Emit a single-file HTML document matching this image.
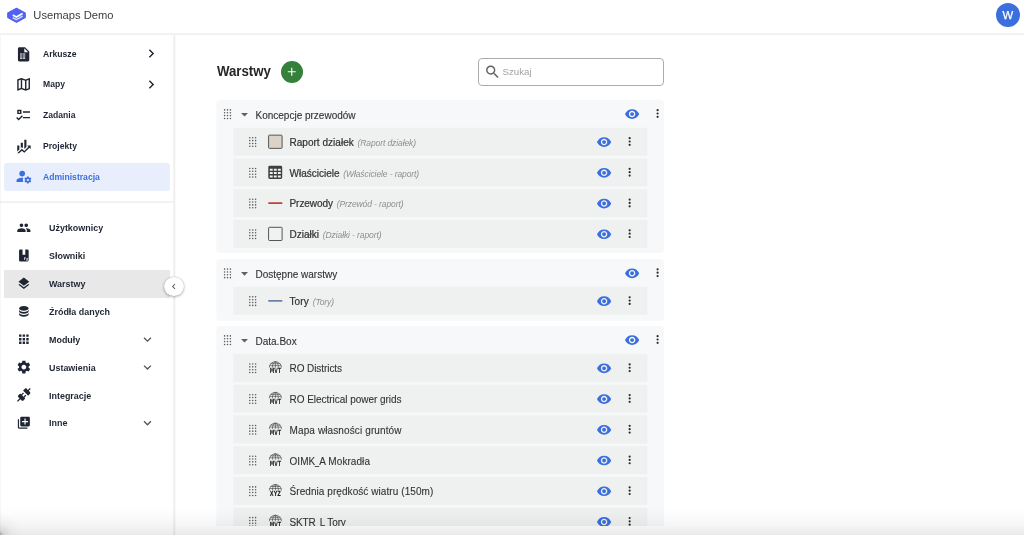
<!DOCTYPE html>
<html lang="pl">
<head>
<meta charset="utf-8">
<title>Usemaps Demo - Warstwy</title>
<style>
*{box-sizing:border-box;margin:0;padding:0}
html,body{width:1024px;height:535px;overflow:hidden;background:#fff}
body{font-family:"Liberation Sans",sans-serif;color:#1f2533;position:relative}
#app{position:absolute;left:0;top:0;width:1024px;height:535px;will-change:transform;opacity:.999}
svg{display:block;position:absolute;overflow:visible}
#hdr{position:absolute;left:0;top:0;width:1024px;height:35px;background:#fff;border-bottom:2px solid #f2f2f2}
#brand{position:absolute;left:33.3px;top:8px;font-size:11.2px;line-height:14px;color:#3c3c3c;white-space:nowrap}
#avatar{position:absolute;left:995.5px;top:2.9px;width:24.6px;height:24.6px;border-radius:50%;background:#3b6fde;color:#fff;font-size:11.3px;line-height:24.6px;text-align:center;-webkit-text-stroke:.25px #fff}
#side{position:absolute;left:0;top:35px;width:176px;height:500px;background:linear-gradient(to right,#fff 0,#fff 173px,#f3f3f3 173px,#f3f3f3 174px,#efefef 174px,#efefef 175px,#fafafa 175px,#fafafa 176px)}
.m1{position:absolute;left:43.4px;font-size:9.1px;font-weight:bold;line-height:12px;color:#1f2533;white-space:nowrap;transform:scaleX(.945);transform-origin:0 50%}
.m2{position:absolute;left:48.7px;font-size:9.7px;font-weight:bold;line-height:12px;color:#1f2533;white-space:nowrap;transform:scaleX(.922);transform-origin:0 50%}
#adm{position:absolute;left:4px;top:163px;width:165.5px;height:27.5px;border-radius:3px;background:#e8eefb}
#sel{position:absolute;left:4px;top:269.5px;width:165.5px;height:28px;background:#e8e8e8}
#sdiv{position:absolute;left:0;top:201px;width:173px;height:2px;background:#f2f2f2}
#coll{position:absolute;left:164.2px;top:276.8px;width:19.4px;height:19.4px;border-radius:50%;background:#fff;box-shadow:0 1px 3px rgba(0,0,0,.3),0 0 1px rgba(0,0,0,.35)}
#title{position:absolute;left:216.6px;top:62px;font-size:14px;font-weight:bold;line-height:18px;color:#262626;transform:scaleX(.945);transform-origin:0 50%}
#addb{position:absolute;left:280.6px;top:60.6px;width:22.4px;height:22.4px;border-radius:50%;background:#35803a}
#search{position:absolute;left:478px;top:58px;width:186px;height:28px;border:1px solid #acacac;border-radius:4px;background:#fff}
#search span{position:absolute;left:23.5px;top:7.4px;font-size:9.7px;line-height:12px;color:#a2a2a2}
.grp{position:absolute;left:216.1px;width:448px;background:#f7f8fa;border-radius:4px}
.gt{position:absolute;left:255.5px;font-size:10px;line-height:12px;color:#333;-webkit-text-stroke:.12px #333;white-space:nowrap}
.row{position:absolute;left:233.2px;width:414.4px;height:28.1px;background:#eff1f1}
.rt{position:absolute;left:289.5px;font-size:10px;line-height:12px;color:#333;white-space:nowrap}
.rt b{font-weight:normal;-webkit-text-stroke:.22px #333}
.rt>span{-webkit-text-stroke:.1px #333}
.us{display:inline-block;width:4px;transform:scaleX(.72);transform-origin:0 50%}
.rt i{font-size:8.5px;color:#8e8e8e;letter-spacing:-.1px;margin-left:1px}
.sw{position:absolute;width:14.5px;height:14.2px;border:1px solid #505050;border-radius:1.2px}
.ln{position:absolute;left:268px;width:14.5px;height:1.5px}
#foot{position:absolute;left:176px;top:525.7px;width:848px;height:9.3px;background:#fff}
#fade{position:absolute;left:0;top:507px;width:1024px;height:28px;background:linear-gradient(to bottom,rgba(0,0,0,0) 0%,rgba(0,0,0,.01) 25%,rgba(0,0,0,.026) 48%,rgba(0,0,0,.048) 70%,rgba(0,0,0,.082) 100%)}
#corner{position:absolute;left:0;top:505px;width:30px;height:30px;background:radial-gradient(circle at 0 100%,rgba(0,0,0,.3) 0,rgba(0,0,0,.09) 4px,rgba(0,0,0,.025) 12px,rgba(0,0,0,0) 22px)}
#ledge{position:absolute;left:0;top:35px;width:1px;height:500px;background:rgba(0,0,0,.03)}
</style>
</head>
<body>
<div id="app">
<div id="hdr">
  <svg style="left:0;top:0" width="34" height="32" viewBox="0 0 34 32"><path d="M16.5 8.3l8.7 4.7v4.4l-8.7 4.9-8.7-4.9V13z" fill="#5262f0" stroke="#5262f0" stroke-width="1.3" stroke-linejoin="round"/><path d="M12.7 15.1l3.7 2 6.2-3.5" fill="none" stroke="#fff" stroke-width="1.7" stroke-linejoin="round"/><path d="M12.7 17.6l3.7 2 6.2-3.5" fill="none" stroke="#fff" stroke-width="1.3" stroke-linejoin="round" opacity=".8"/></svg>
  <div id="brand">Usemaps Demo</div>
  <div id="avatar">W</div>
</div>
<div id="side"></div>
<div id="adm"></div>
<div id="sel"></div>
<div id="sdiv"></div>

<div class="m1" style="top:48px">Arkusze</div>
<svg style="left:15px;top:45px" width="18" height="18" viewBox="15 45 18 18"><path transform="translate(15.10 45.80) scale(0.7083)" d="M14 2H6C4.89 2 4 2.9 4 4V20C4 21.11 4.89 22 6 22H18C19.11 22 20 21.11 20 20V8L14 2M13 3.5L18.5 9H13V3.5M7 10.7V12.4H10.4V10.7H7M7 13.6V15.2H10.4V13.6H7M7 16.5V18.4H10.4V16.5H7M11.2 10.7V12.4H14.4V10.7H11.2M11.2 13.6V15.2H14.4V13.6H11.2M11.2 16.5V18.4H14.4V16.5H11.2Z" fill="#1f2533" fill-rule="evenodd"/></svg>
<svg style="left:142px;top:45px" width="18" height="18" viewBox="142 45 18 18"><path transform="translate(142.80 45.10) scale(0.7083)" d="M10 6L8.59 7.41 13.17 12l-4.58 4.59L10 18l6-6z" fill="#1f2533"/></svg>
<div class="m1" style="top:78px">Mapy</div>
<svg style="left:15px;top:75px" width="18" height="18" viewBox="15 75 18 18"><path transform="translate(15.10 75.80) scale(0.7083)" d="M20.5 3l-.16.03L15 5.1 9 3 3.36 4.9c-.21.07-.36.25-.36.48V20.5c0 .28.22.5.5.5l.16-.03L9 18.9l6 2.1 5.64-1.9c.21-.07.36-.25.36-.48V3.5c0-.28-.22-.5-.5-.5zM10 5.47l4 1.4v11.66l-4-1.4V5.47zm-5 .99l3-1.01v11.7l-3 1.16V6.46zm14 11.08l-3 1.01V6.86l3-1.16v11.84z" fill="#1f2533"/></svg>
<svg style="left:142px;top:75px" width="18" height="18" viewBox="142 75 18 18"><path transform="translate(142.80 75.90) scale(0.7083)" d="M10 6L8.59 7.41 13.17 12l-4.58 4.59L10 18l6-6z" fill="#1f2533"/></svg>
<div class="m1" style="top:109px">Zadania</div>
<svg style="left:15px;top:106px" width="18" height="18" viewBox="15 106 18 18"><path transform="translate(15.10 106.30) scale(0.7083)" d="M3,5H9V11H3V5M5,7V9H7V7H5M11,7H21V9H11V7M11,15H21V17H11V15M5,20L1.5,16.5L2.91,15.09L5,17.17L9.59,12.59L11,14L5,20Z" fill="#1f2533"/></svg>
<div class="m1" style="top:140px">Projekty</div>
<svg style="left:15px;top:137px" width="18" height="18" viewBox="15 137 18 18"><path transform="translate(15.10 137.70) scale(0.7083)" d="M6,16.5L3,19.44V11H6M11,14.66L9.43,13.32L8,14.64V7H11M16,13L13,16V3H16M18.81,12.81L17,11H22V16L20.21,14.21L13,21.36L9.53,18.34L5.75,22H3L9.47,15.66L13,18.64" fill="#1f2533"/></svg>
<div class="m1" style="top:171px;color:#3b6fde">Administracja</div>
<svg style="left:15px;top:167px" width="18" height="18" viewBox="15 167 18 18"><path transform="translate(15.10 167.90) scale(0.7083)" d="M10 4A4 4 0 0 0 6 8A4 4 0 0 0 10 12A4 4 0 0 0 14 8A4 4 0 0 0 10 4M17 12C16.87 12 16.76 12.09 16.74 12.21L16.55 13.53C16.25 13.66 15.96 13.82 15.7 14L14.46 13.5C14.35 13.5 14.22 13.5 14.15 13.63L13.15 15.36C13.09 15.47 13.11 15.6 13.21 15.68L14.27 16.5C14.25 16.67 14.24 16.83 14.24 17C14.24 17.17 14.25 17.33 14.27 17.5L13.21 18.32C13.12 18.4 13.09 18.53 13.15 18.64L14.15 20.37C14.21 20.5 14.34 20.5 14.46 20.5L15.7 20C15.96 20.18 16.24 20.35 16.55 20.47L16.74 21.79C16.76 21.91 16.86 22 17 22H19C19.11 22 19.22 21.91 19.24 21.79L19.43 20.47C19.73 20.34 20 20.18 20.27 20L21.5 20.5C21.63 20.5 21.76 20.5 21.83 20.37L22.83 18.64C22.89 18.53 22.86 18.4 22.77 18.32L21.7 17.5C21.72 17.33 21.74 17.17 21.74 17C21.74 16.83 21.73 16.67 21.7 16.5L22.76 15.68C22.85 15.6 22.88 15.47 22.82 15.36L21.82 13.63C21.76 13.5 21.63 13.5 21.5 13.5L20.27 14C20 13.82 19.73 13.65 19.42 13.53L19.23 12.21C19.22 12.09 19.11 12 19 12H17M10 14C5.58 14 2 15.79 2 18V20H11.68A7 7 0 0 1 11 17A7 7 0 0 1 11.64 14.09C11.11 14.03 10.56 14 10 14M18 15.5C18.83 15.5 19.5 16.17 19.5 17C19.5 17.83 18.83 18.5 18 18.5C17.16 18.5 16.5 17.83 16.5 17C16.5 16.17 17.17 15.5 18 15.5Z" fill="#3b6fde"/></svg>
<div class="m2" style="top:222px">Użytkownicy</div>
<svg style="left:16px;top:220px" width="16" height="15" viewBox="16 220 16 15"><path transform="translate(16.65 220.50) scale(0.6000)" d="M16 11c1.66 0 2.99-1.34 2.99-3S17.66 5 16 5c-1.66 0-3 1.34-3 3s1.34 3 3 3zm-8 0c1.66 0 2.99-1.34 2.99-3S9.66 5 8 5C6.34 5 5 6.34 5 8s1.34 3 3 3zm0 2c-2.33 0-7 1.17-7 3.5V19h14v-2.5c0-2.33-4.67-3.5-7-3.5zm8 0c-.29 0-.62.02-.97.05 1.16.84 1.97 1.97 1.97 3.45V19h6v-2.5c0-2.33-4.67-3.5-7-3.5z" fill="#1f2533"/></svg>
<div class="m2" style="top:250px">Słowniki</div>
<svg style="left:16px;top:248px" width="16" height="15" viewBox="16 248 16 15"><path transform="translate(16.65 248.37) scale(0.6000)" d="M6 2h12a2 2 0 0 1 2 2v16a2 2 0 0 1-2 2H6a2 2 0 0 1-2-2V4a2 2 0 0 1 2-2zm3.8 0v8.8h4.6V2zM12.6 14.6v4.6h1.1v-1.7h1v-.9h-1v-1.1h1.6v-.9zM16 16.3v.9h1.5l-1.7 2v.9h3.4v-.9h-1.8l1.7-2v-.9z" fill="#1f2533"/></svg>
<div class="m2" style="top:278px">Warstwy</div>
<svg style="left:16px;top:276px" width="16" height="15" viewBox="16 276 16 15"><path transform="translate(16.65 276.24) scale(0.6000)" d="M11.99 18.54l-7.37-5.73L3 14.07l9 7 9-7-1.63-1.27-7.38 5.74zM12 16l7.36-5.73L21 9l-9-7-9 7 1.63 1.27L12 16z" fill="#1f2533"/></svg>
<div class="m2" style="top:306px">Źródła danych</div>
<svg style="left:16px;top:304px" width="16" height="15" viewBox="16 304 16 15"><path transform="translate(16.65 304.11) scale(0.6000)" d="M12,3C7.58,3 4,4.79 4,7C4,9.21 7.58,11 12,11C16.42,11 20,9.21 20,7C20,4.79 16.42,3 12,3M4,9V12C4,14.21 7.58,16 12,16C16.42,16 20,14.21 20,12V9C20,11.21 16.42,13 12,13C7.58,13 4,11.21 4,9M4,14V17C4,19.21 7.58,21 12,21C16.42,21 20,19.21 20,17V14C20,16.21 16.42,18 12,18C7.58,18 4,16.21 4,14Z" fill="#1f2533"/></svg>
<div class="m2" style="top:334px">Moduły</div>
<svg style="left:16px;top:331px" width="16" height="16" viewBox="16 331 16 16"><path transform="translate(16.65 331.98) scale(0.6000)" d="M4 8h4V4H4v4zm6 12h4v-4h-4v4zm-6 0h4v-4H4v4zm0-6h4v-4H4v4zm6 0h4v-4h-4v4zm6-10v4h4V4h-4zm-6 4h4V4h-4v4zm6 6h4v-4h-4v4zm0 6h4v-4h-4v4z" fill="#1f2533"/></svg>
<svg style="left:139px;top:331px" width="17" height="17" viewBox="139 331 17 17"><path transform="translate(139.65 331.68) scale(0.6500)" d="M16.59 8.59L12 13.17 7.41 8.59 6 10l6 6 6-6z" fill="#555"/></svg>
<div class="m2" style="top:362px">Ustawienia</div>
<svg style="left:15px;top:359px" width="17" height="17" viewBox="15 359 17 17"><path transform="translate(15.85 359.05) scale(0.6667)" d="M19.14 12.94c.04-.3.06-.61.06-.94 0-.32-.02-.64-.07-.94l2.03-1.58c.18-.14.23-.41.12-.61l-1.92-3.32c-.12-.22-.37-.29-.59-.22l-2.39.96c-.5-.38-1.03-.7-1.62-.94l-.36-2.54c-.04-.24-.24-.41-.48-.41h-3.84c-.24 0-.43.17-.47.41l-.36 2.54c-.59.24-1.13.57-1.62.94l-2.39-.96c-.22-.08-.47 0-.59.22L2.74 8.87c-.12.21-.08.47.12.61l2.03 1.58c-.05.3-.09.63-.09.94s.02.64.07.94l-2.03 1.58c-.18.14-.23.41-.12.61l1.92 3.32c.12.22.37.29.59.22l2.39-.96c.5.38 1.03.7 1.62.94l.36 2.54c.05.24.24.41.48.41h3.84c.24 0 .44-.17.47-.41l.36-2.54c.59-.24 1.13-.56 1.62-.94l2.39.96c.22.08.47 0 .59-.22l1.92-3.32c.12-.22.07-.47-.12-.61l-2.01-1.58zM12 15.6c-1.98 0-3.6-1.62-3.6-3.6s1.62-3.6 3.6-3.6 3.6 1.62 3.6 3.6-1.62 3.6-3.6 3.6z" fill="#1f2533"/></svg>
<svg style="left:139px;top:359px" width="17" height="17" viewBox="139 359 17 17"><path transform="translate(139.65 359.55) scale(0.6500)" d="M16.59 8.59L12 13.17 7.41 8.59 6 10l6 6 6-6z" fill="#555"/></svg>
<div class="m2" style="top:390px">Integracje</div>
<svg style="left:16px;top:387px" width="16" height="16" viewBox="16 387 16 16"><path transform="translate(16.05 387.12) scale(0.6500)" d="M21.4 7.5C22.2 8.3 22.2 9.6 21.4 10.3L18.6 13.1L10.8 5.3L13.6 2.5C14.4 1.7 15.7 1.7 16.4 2.5L18.2 4.3L21.2 1.3L22.6 2.7L19.6 5.7L21.4 7.5M15.6 13.3L14.2 11.9L11.4 14.7L9.3 12.6L12.1 9.8L10.7 8.4L7.9 11.2L6.4 9.8L3.6 12.6C2.8 13.4 2.8 14.7 3.6 15.4L5.4 17.2L1.4 21.2L2.8 22.6L6.8 18.6L8.6 20.4C9.4 21.2 10.7 21.2 11.4 20.4L14.2 17.6L12.8 16.2L15.6 13.3Z" fill="#1f2533"/></svg>
<div class="m2" style="top:417px">Inne</div>
<svg style="left:16px;top:415px" width="16" height="15" viewBox="16 415 16 15"><path transform="translate(16.65 415.59) scale(0.6000)" d="M4 6H2v14c0 1.1.9 2 2 2h14v-2H4V6zm16-4H8c-1.1 0-2 .9-2 2v12c0 1.1.9 2 2 2h12c1.1 0 2-.9 2-2V4c0-1.1-.9-2-2-2zm-1 9h-4v4h-2v-4H9V9h4V5h2v4h4v2z" fill="#1f2533"/></svg>
<svg style="left:139px;top:415px" width="17" height="16" viewBox="139 415 17 16"><path transform="translate(139.65 415.29) scale(0.6500)" d="M16.59 8.59L12 13.17 7.41 8.59 6 10l6 6 6-6z" fill="#555"/></svg>
<div id="coll"></div>
<svg style="left:168px;top:280px" width="12" height="12" viewBox="168 280 12 12"><path transform="translate(168.30 280.90) scale(0.4583)" d="M15.41 7.41L14 6l-6 6 6 6 1.41-1.41L10.83 12z" fill="#555"/></svg>
<div id="title">Warstwy</div><div id="addb"></div>
<svg style="left:284px;top:64px" width="15" height="15" viewBox="284 64 15 15"><path transform="translate(284.95 64.95) scale(0.5667)" d="M19 13h-6v6h-2v-6H5v-2h6V5h2v6h6v2z" fill="#fff"/></svg>
<div id="search"><span>Szukaj</span></div>
<svg style="left:483px;top:63px" width="19" height="18" viewBox="483 63 19 18"><path transform="translate(483.90 63.30) scale(0.7167)" d="M15.5 14h-.79l-.28-.27C15.41 12.59 16 11.11 16 9.5 16 5.91 13.09 3 9.5 3S3 5.91 3 9.5 5.91 16 9.5 16c1.61 0 3.09-.59 4.23-1.57l.27.28v.79l5 4.99L20.49 19l-4.99-5zm-6 0C7.01 14 5 11.99 5 9.5S7.01 5 9.5 5 14 7.01 14 9.5 11.99 14 9.5 14z" fill="#666"/></svg>
<svg style="left:210px;top:95px" width="460" height="440" viewBox="210 95 460 440"><rect x="216.3" y="99.9" width="447.8" height="153.2" rx="4" fill="#f7f8fa"/><rect x="216.3" y="259.1" width="447.8" height="61.6" rx="4" fill="#f7f8fa"/><rect x="216.3" y="325.9" width="447.8" height="210" rx="4" fill="#f7f8fa"/><rect x="233.3" y="127.70" width="414.1" height="28.1" fill="#eff1f1"/><rect x="233.3" y="158.42" width="414.1" height="28.1" fill="#eff1f1"/><rect x="233.3" y="189.14" width="414.1" height="28.1" fill="#eff1f1"/><rect x="233.3" y="219.86" width="414.1" height="28.1" fill="#eff1f1"/><rect x="233.3" y="286.80" width="414.1" height="28.1" fill="#eff1f1"/><rect x="233.3" y="353.95" width="414.1" height="28.1" fill="#eff1f1"/><rect x="233.3" y="384.67" width="414.1" height="28.1" fill="#eff1f1"/><rect x="233.3" y="415.39" width="414.1" height="28.1" fill="#eff1f1"/><rect x="233.3" y="446.11" width="414.1" height="28.1" fill="#eff1f1"/><rect x="233.3" y="476.83" width="414.1" height="28.1" fill="#eff1f1"/><rect x="233.3" y="507.55" width="414.1" height="28.1" fill="#eff1f1"/></svg>
<div class="gt" style="top:110px">Koncepcje przewodów</div>
<svg style="left:223px;top:109px" width="9" height="11" viewBox="223 109 9 11"><g fill="#5c5c5c"><circle cx="224.60" cy="109.90" r="0.78"/><circle cx="227.50" cy="109.90" r="0.78"/><circle cx="230.40" cy="109.90" r="0.78"/><circle cx="224.60" cy="112.75" r="0.78"/><circle cx="227.50" cy="112.75" r="0.78"/><circle cx="230.40" cy="112.75" r="0.78"/><circle cx="224.60" cy="115.60" r="0.78"/><circle cx="227.50" cy="115.60" r="0.78"/><circle cx="230.40" cy="115.60" r="0.78"/><circle cx="224.60" cy="118.45" r="0.78"/><circle cx="227.50" cy="118.45" r="0.78"/><circle cx="230.40" cy="118.45" r="0.78"/></g></svg>
<svg style="left:241px;top:112px" width="7" height="5" viewBox="241 112 7 5"><path d="M241 112.90h7l-3.5 3.6z" fill="#606060"/></svg>
<svg style="left:624px;top:106px" width="16" height="16" viewBox="624 106 16 16"><path transform="translate(624.35 106.35) scale(0.6458)" d="M12 4.5C7 4.5 2.73 7.61 1 12c1.73 4.39 6 7.5 11 7.5s9.27-3.11 11-7.5c-1.73-4.39-6-7.5-11-7.5zM12 17c-2.76 0-5-2.24-5-5s2.24-5 5-5 5 2.24 5 5-2.24 5-5 5zm0-8c-1.66 0-3 1.34-3 3s1.34 3 3 3 3-1.34 3-3-1.34-3-3-3z" fill="#3b6fde"/></svg>
<svg style="left:655px;top:107px" width="5" height="13" viewBox="655 107 5 13"><circle cx="657.60" cy="110.15" r="1.1" fill="#2a2a2a"/><circle cx="657.60" cy="113.50" r="1.1" fill="#2a2a2a"/><circle cx="657.60" cy="116.85" r="1.1" fill="#2a2a2a"/></svg>
<div class="gt" style="top:269px">Dostępne warstwy</div>
<svg style="left:223px;top:268px" width="9" height="11" viewBox="223 268 9 11"><g fill="#5c5c5c"><circle cx="224.60" cy="269.10" r="0.78"/><circle cx="227.50" cy="269.10" r="0.78"/><circle cx="230.40" cy="269.10" r="0.78"/><circle cx="224.60" cy="271.95" r="0.78"/><circle cx="227.50" cy="271.95" r="0.78"/><circle cx="230.40" cy="271.95" r="0.78"/><circle cx="224.60" cy="274.80" r="0.78"/><circle cx="227.50" cy="274.80" r="0.78"/><circle cx="230.40" cy="274.80" r="0.78"/><circle cx="224.60" cy="277.65" r="0.78"/><circle cx="227.50" cy="277.65" r="0.78"/><circle cx="230.40" cy="277.65" r="0.78"/></g></svg>
<svg style="left:241px;top:272px" width="7" height="4" viewBox="241 272 7 4"><path d="M241 272.10h7l-3.5 3.6z" fill="#606060"/></svg>
<svg style="left:624px;top:265px" width="16" height="17" viewBox="624 265 16 17"><path transform="translate(624.35 265.55) scale(0.6458)" d="M12 4.5C7 4.5 2.73 7.61 1 12c1.73 4.39 6 7.5 11 7.5s9.27-3.11 11-7.5c-1.73-4.39-6-7.5-11-7.5zM12 17c-2.76 0-5-2.24-5-5s2.24-5 5-5 5 2.24 5 5-2.24 5-5 5zm0-8c-1.66 0-3 1.34-3 3s1.34 3 3 3 3-1.34 3-3-1.34-3-3-3z" fill="#3b6fde"/></svg>
<svg style="left:655px;top:266px" width="5" height="13" viewBox="655 266 5 13"><circle cx="657.60" cy="269.35" r="1.1" fill="#2a2a2a"/><circle cx="657.60" cy="272.70" r="1.1" fill="#2a2a2a"/><circle cx="657.60" cy="276.05" r="1.1" fill="#2a2a2a"/></svg>
<div class="gt" style="top:336px">Data.Box</div>
<svg style="left:223px;top:334px" width="9" height="12" viewBox="223 334 9 12"><g fill="#5c5c5c"><circle cx="224.60" cy="335.90" r="0.78"/><circle cx="227.50" cy="335.90" r="0.78"/><circle cx="230.40" cy="335.90" r="0.78"/><circle cx="224.60" cy="338.75" r="0.78"/><circle cx="227.50" cy="338.75" r="0.78"/><circle cx="230.40" cy="338.75" r="0.78"/><circle cx="224.60" cy="341.60" r="0.78"/><circle cx="227.50" cy="341.60" r="0.78"/><circle cx="230.40" cy="341.60" r="0.78"/><circle cx="224.60" cy="344.45" r="0.78"/><circle cx="227.50" cy="344.45" r="0.78"/><circle cx="230.40" cy="344.45" r="0.78"/></g></svg>
<svg style="left:241px;top:338px" width="7" height="5" viewBox="241 338 7 5"><path d="M241 338.90h7l-3.5 3.6z" fill="#606060"/></svg>
<svg style="left:624px;top:332px" width="16" height="16" viewBox="624 332 16 16"><path transform="translate(624.35 332.35) scale(0.6458)" d="M12 4.5C7 4.5 2.73 7.61 1 12c1.73 4.39 6 7.5 11 7.5s9.27-3.11 11-7.5c-1.73-4.39-6-7.5-11-7.5zM12 17c-2.76 0-5-2.24-5-5s2.24-5 5-5 5 2.24 5 5-2.24 5-5 5zm0-8c-1.66 0-3 1.34-3 3s1.34 3 3 3 3-1.34 3-3-1.34-3-3-3z" fill="#3b6fde"/></svg>
<svg style="left:655px;top:333px" width="5" height="13" viewBox="655 333 5 13"><circle cx="657.60" cy="336.15" r="1.1" fill="#2a2a2a"/><circle cx="657.60" cy="339.50" r="1.1" fill="#2a2a2a"/><circle cx="657.60" cy="342.85" r="1.1" fill="#2a2a2a"/></svg>
<div class="rt" style="top:137px"><b style="letter-spacing:0.025px">Raport działek</b> <i>(Raport działek)</i></div>
<svg style="left:248px;top:136px" width="9" height="12" viewBox="248 136 9 12"><g fill="#5c5c5c"><circle cx="249.80" cy="137.75" r="0.78"/><circle cx="252.70" cy="137.75" r="0.78"/><circle cx="255.60" cy="137.75" r="0.78"/><circle cx="249.80" cy="140.60" r="0.78"/><circle cx="252.70" cy="140.60" r="0.78"/><circle cx="255.60" cy="140.60" r="0.78"/><circle cx="249.80" cy="143.45" r="0.78"/><circle cx="252.70" cy="143.45" r="0.78"/><circle cx="255.60" cy="143.45" r="0.78"/><circle cx="249.80" cy="146.30" r="0.78"/><circle cx="252.70" cy="146.30" r="0.78"/><circle cx="255.60" cy="146.30" r="0.78"/></g></svg>
<svg style="left:267px;top:133px" width="17" height="17" viewBox="267 133 17 17"><rect x="268.6" y="135.15" width="13.5" height="13.2" rx="0.8" fill="#dcd2c8" stroke="#4c4c4c" stroke-width="0.95"/></svg>
<svg style="left:596px;top:134px" width="16" height="16" viewBox="596 134 16 16"><path transform="translate(596.35 134.35) scale(0.6458)" d="M12 4.5C7 4.5 2.73 7.61 1 12c1.73 4.39 6 7.5 11 7.5s9.27-3.11 11-7.5c-1.73-4.39-6-7.5-11-7.5zM12 17c-2.76 0-5-2.24-5-5s2.24-5 5-5 5 2.24 5 5-2.24 5-5 5zm0-8c-1.66 0-3 1.34-3 3s1.34 3 3 3 3-1.34 3-3-1.34-3-3-3z" fill="#3b6fde"/></svg>
<svg style="left:627px;top:135px" width="5" height="13" viewBox="627 135 5 13"><circle cx="629.65" cy="138.15" r="1.1" fill="#2a2a2a"/><circle cx="629.65" cy="141.50" r="1.1" fill="#2a2a2a"/><circle cx="629.65" cy="144.85" r="1.1" fill="#2a2a2a"/></svg>
<div class="rt" style="top:168px"><b style="letter-spacing:-0.001px">Właściciele</b> <i>(Właściciele - raport)</i></div>
<svg style="left:248px;top:167px" width="9" height="12" viewBox="248 167 9 12"><g fill="#5c5c5c"><circle cx="249.80" cy="168.47" r="0.78"/><circle cx="252.70" cy="168.47" r="0.78"/><circle cx="255.60" cy="168.47" r="0.78"/><circle cx="249.80" cy="171.32" r="0.78"/><circle cx="252.70" cy="171.32" r="0.78"/><circle cx="255.60" cy="171.32" r="0.78"/><circle cx="249.80" cy="174.17" r="0.78"/><circle cx="252.70" cy="174.17" r="0.78"/><circle cx="255.60" cy="174.17" r="0.78"/><circle cx="249.80" cy="177.02" r="0.78"/><circle cx="252.70" cy="177.02" r="0.78"/><circle cx="255.60" cy="177.02" r="0.78"/></g></svg>
<svg style="left:268px;top:165px" width="15" height="15" viewBox="268 165 15 15"><path transform="translate(268.3 165.82)" d="M1.4 0h11.1a1.4 1.4 0 0 1 1.4 1.4v10.4a1.4 1.4 0 0 1-1.4 1.4H1.4a1.4 1.4 0 0 1-1.4-1.4V1.4a1.4 1.4 0 0 1 1.4-1.4zM1.5 3.0H4.4V4.9H1.5V3.0M1.5 6.3H4.4V8.2H1.5V6.3M1.5 9.6H4.4V11.6H1.5V9.6M5.55 3.0H8.45V4.9H5.55V3.0M5.55 6.3H8.45V8.2H5.55V6.3M5.55 9.6H8.45V11.6H5.55V9.6M9.6 3.0H12.5V4.9H9.6V3.0M9.6 6.3H12.5V8.2H9.6V6.3M9.6 9.6H12.5V11.6H9.6V9.6Z" fill="#3e3e3e" fill-rule="evenodd"/></svg>
<svg style="left:596px;top:165px" width="16" height="16" viewBox="596 165 16 16"><path transform="translate(596.35 165.07) scale(0.6458)" d="M12 4.5C7 4.5 2.73 7.61 1 12c1.73 4.39 6 7.5 11 7.5s9.27-3.11 11-7.5c-1.73-4.39-6-7.5-11-7.5zM12 17c-2.76 0-5-2.24-5-5s2.24-5 5-5 5 2.24 5 5-2.24 5-5 5zm0-8c-1.66 0-3 1.34-3 3s1.34 3 3 3 3-1.34 3-3-1.34-3-3-3z" fill="#3b6fde"/></svg>
<svg style="left:627px;top:166px" width="5" height="13" viewBox="627 166 5 13"><circle cx="629.65" cy="168.87" r="1.1" fill="#2a2a2a"/><circle cx="629.65" cy="172.22" r="1.1" fill="#2a2a2a"/><circle cx="629.65" cy="175.57" r="1.1" fill="#2a2a2a"/></svg>
<div class="rt" style="top:198px"><b style="letter-spacing:-0.059px">Przewody</b> <i>(Przewód - raport)</i></div>
<svg style="left:248px;top:198px" width="9" height="11" viewBox="248 198 9 11"><g fill="#5c5c5c"><circle cx="249.80" cy="199.19" r="0.78"/><circle cx="252.70" cy="199.19" r="0.78"/><circle cx="255.60" cy="199.19" r="0.78"/><circle cx="249.80" cy="202.04" r="0.78"/><circle cx="252.70" cy="202.04" r="0.78"/><circle cx="255.60" cy="202.04" r="0.78"/><circle cx="249.80" cy="204.89" r="0.78"/><circle cx="252.70" cy="204.89" r="0.78"/><circle cx="255.60" cy="204.89" r="0.78"/><circle cx="249.80" cy="207.74" r="0.78"/><circle cx="252.70" cy="207.74" r="0.78"/><circle cx="255.60" cy="207.74" r="0.78"/></g></svg>
<svg style="left:268px;top:201px" width="15" height="5" viewBox="268 201 15 5"><rect x="268.2" y="202.24" width="14.2" height="1.7" rx=".4" fill="#bb433b"/></svg>
<svg style="left:596px;top:195px" width="16" height="17" viewBox="596 195 16 17"><path transform="translate(596.35 195.79) scale(0.6458)" d="M12 4.5C7 4.5 2.73 7.61 1 12c1.73 4.39 6 7.5 11 7.5s9.27-3.11 11-7.5c-1.73-4.39-6-7.5-11-7.5zM12 17c-2.76 0-5-2.24-5-5s2.24-5 5-5 5 2.24 5 5-2.24 5-5 5zm0-8c-1.66 0-3 1.34-3 3s1.34 3 3 3 3-1.34 3-3-1.34-3-3-3z" fill="#3b6fde"/></svg>
<svg style="left:627px;top:196px" width="5" height="13" viewBox="627 196 5 13"><circle cx="629.65" cy="199.59" r="1.1" fill="#2a2a2a"/><circle cx="629.65" cy="202.94" r="1.1" fill="#2a2a2a"/><circle cx="629.65" cy="206.29" r="1.1" fill="#2a2a2a"/></svg>
<div class="rt" style="top:229px"><b style="letter-spacing:0.008px">Działki</b> <i>(Działki - raport)</i></div>
<svg style="left:248px;top:229px" width="9" height="11" viewBox="248 229 9 11"><g fill="#5c5c5c"><circle cx="249.80" cy="229.91" r="0.78"/><circle cx="252.70" cy="229.91" r="0.78"/><circle cx="255.60" cy="229.91" r="0.78"/><circle cx="249.80" cy="232.76" r="0.78"/><circle cx="252.70" cy="232.76" r="0.78"/><circle cx="255.60" cy="232.76" r="0.78"/><circle cx="249.80" cy="235.61" r="0.78"/><circle cx="252.70" cy="235.61" r="0.78"/><circle cx="255.60" cy="235.61" r="0.78"/><circle cx="249.80" cy="238.46" r="0.78"/><circle cx="252.70" cy="238.46" r="0.78"/><circle cx="255.60" cy="238.46" r="0.78"/></g></svg>
<svg style="left:267px;top:225px" width="17" height="17" viewBox="267 225 17 17"><rect x="268.6" y="227.31" width="13.5" height="13.2" rx="0.8" fill="#f0f1f1" stroke="#4c4c4c" stroke-width="0.95"/></svg>
<svg style="left:596px;top:226px" width="16" height="17" viewBox="596 226 16 17"><path transform="translate(596.35 226.51) scale(0.6458)" d="M12 4.5C7 4.5 2.73 7.61 1 12c1.73 4.39 6 7.5 11 7.5s9.27-3.11 11-7.5c-1.73-4.39-6-7.5-11-7.5zM12 17c-2.76 0-5-2.24-5-5s2.24-5 5-5 5 2.24 5 5-2.24 5-5 5zm0-8c-1.66 0-3 1.34-3 3s1.34 3 3 3 3-1.34 3-3-1.34-3-3-3z" fill="#3b6fde"/></svg>
<svg style="left:627px;top:227px" width="5" height="13" viewBox="627 227 5 13"><circle cx="629.65" cy="230.31" r="1.1" fill="#2a2a2a"/><circle cx="629.65" cy="233.66" r="1.1" fill="#2a2a2a"/><circle cx="629.65" cy="237.01" r="1.1" fill="#2a2a2a"/></svg>
<div class="rt" style="top:296px"><b style="letter-spacing:0.120px">Tory</b> <i>(Tory)</i></div>
<svg style="left:248px;top:295px" width="9" height="12" viewBox="248 295 9 12"><g fill="#5c5c5c"><circle cx="249.80" cy="296.85" r="0.78"/><circle cx="252.70" cy="296.85" r="0.78"/><circle cx="255.60" cy="296.85" r="0.78"/><circle cx="249.80" cy="299.70" r="0.78"/><circle cx="252.70" cy="299.70" r="0.78"/><circle cx="255.60" cy="299.70" r="0.78"/><circle cx="249.80" cy="302.55" r="0.78"/><circle cx="252.70" cy="302.55" r="0.78"/><circle cx="255.60" cy="302.55" r="0.78"/><circle cx="249.80" cy="305.40" r="0.78"/><circle cx="252.70" cy="305.40" r="0.78"/><circle cx="255.60" cy="305.40" r="0.78"/></g></svg>
<svg style="left:268px;top:298px" width="15" height="5" viewBox="268 298 15 5"><rect x="268.2" y="300.05" width="14.2" height="1.7" rx=".4" fill="#6a82a9"/></svg>
<svg style="left:596px;top:293px" width="16" height="16" viewBox="596 293 16 16"><path transform="translate(596.35 293.45) scale(0.6458)" d="M12 4.5C7 4.5 2.73 7.61 1 12c1.73 4.39 6 7.5 11 7.5s9.27-3.11 11-7.5c-1.73-4.39-6-7.5-11-7.5zM12 17c-2.76 0-5-2.24-5-5s2.24-5 5-5 5 2.24 5 5-2.24 5-5 5zm0-8c-1.66 0-3 1.34-3 3s1.34 3 3 3 3-1.34 3-3-1.34-3-3-3z" fill="#3b6fde"/></svg>
<svg style="left:627px;top:294px" width="5" height="13" viewBox="627 294 5 13"><circle cx="629.65" cy="297.25" r="1.1" fill="#2a2a2a"/><circle cx="629.65" cy="300.60" r="1.1" fill="#2a2a2a"/><circle cx="629.65" cy="303.95" r="1.1" fill="#2a2a2a"/></svg>
<div class="rt" style="top:363px"><span style="letter-spacing:-0.075px">RO Districts</span></div>
<svg style="left:248px;top:363px" width="9" height="11" viewBox="248 363 9 11"><g fill="#5c5c5c"><circle cx="249.80" cy="364.00" r="0.78"/><circle cx="252.70" cy="364.00" r="0.78"/><circle cx="255.60" cy="364.00" r="0.78"/><circle cx="249.80" cy="366.85" r="0.78"/><circle cx="252.70" cy="366.85" r="0.78"/><circle cx="255.60" cy="366.85" r="0.78"/><circle cx="249.80" cy="369.70" r="0.78"/><circle cx="252.70" cy="369.70" r="0.78"/><circle cx="255.60" cy="369.70" r="0.78"/><circle cx="249.80" cy="372.55" r="0.78"/><circle cx="252.70" cy="372.55" r="0.78"/><circle cx="255.60" cy="372.55" r="0.78"/></g></svg>
<svg style="left:267px;top:360px" width="17" height="16" viewBox="267 360 17 16"><g transform="translate(275.40 368.15)"><g fill="none" stroke="#404040" stroke-width="0.62"><path d="M-6.1 -0.6a6.1 5.9 0 0 1 12.2 0"/><path d="M-3 -0.6c0-3.3 1.3-5.9 3-5.9s3 2.6 3 5.9"/><path d="M0 -6.5v5.9"/><path d="M-5 -4.5h10"/><path d="M-5.9 -2.5h11.8"/></g><text x="0" y="5.25" text-anchor="middle" font-family="DejaVu Sans Condensed,Liberation Sans,sans-serif" font-weight="bold" font-size="7.1" fill="#1e1e1e" textLength="11.2" lengthAdjust="spacingAndGlyphs">MVT</text></g></svg>
<svg style="left:596px;top:360px" width="16" height="17" viewBox="596 360 16 17"><path transform="translate(596.35 360.60) scale(0.6458)" d="M12 4.5C7 4.5 2.73 7.61 1 12c1.73 4.39 6 7.5 11 7.5s9.27-3.11 11-7.5c-1.73-4.39-6-7.5-11-7.5zM12 17c-2.76 0-5-2.24-5-5s2.24-5 5-5 5 2.24 5 5-2.24 5-5 5zm0-8c-1.66 0-3 1.34-3 3s1.34 3 3 3 3-1.34 3-3-1.34-3-3-3z" fill="#3b6fde"/></svg>
<svg style="left:627px;top:361px" width="5" height="13" viewBox="627 361 5 13"><circle cx="629.65" cy="364.40" r="1.1" fill="#2a2a2a"/><circle cx="629.65" cy="367.75" r="1.1" fill="#2a2a2a"/><circle cx="629.65" cy="371.10" r="1.1" fill="#2a2a2a"/></svg>
<div class="rt" style="top:394px"><span style="letter-spacing:-0.034px">RO Electrical power grids</span></div>
<svg style="left:248px;top:393px" width="9" height="12" viewBox="248 393 9 12"><g fill="#5c5c5c"><circle cx="249.80" cy="394.72" r="0.78"/><circle cx="252.70" cy="394.72" r="0.78"/><circle cx="255.60" cy="394.72" r="0.78"/><circle cx="249.80" cy="397.57" r="0.78"/><circle cx="252.70" cy="397.57" r="0.78"/><circle cx="255.60" cy="397.57" r="0.78"/><circle cx="249.80" cy="400.42" r="0.78"/><circle cx="252.70" cy="400.42" r="0.78"/><circle cx="255.60" cy="400.42" r="0.78"/><circle cx="249.80" cy="403.27" r="0.78"/><circle cx="252.70" cy="403.27" r="0.78"/><circle cx="255.60" cy="403.27" r="0.78"/></g></svg>
<svg style="left:267px;top:390px" width="17" height="17" viewBox="267 390 17 17"><g transform="translate(275.40 398.87)"><g fill="none" stroke="#404040" stroke-width="0.62"><path d="M-6.1 -0.6a6.1 5.9 0 0 1 12.2 0"/><path d="M-3 -0.6c0-3.3 1.3-5.9 3-5.9s3 2.6 3 5.9"/><path d="M0 -6.5v5.9"/><path d="M-5 -4.5h10"/><path d="M-5.9 -2.5h11.8"/></g><text x="0" y="5.25" text-anchor="middle" font-family="DejaVu Sans Condensed,Liberation Sans,sans-serif" font-weight="bold" font-size="7.1" fill="#1e1e1e" textLength="11.2" lengthAdjust="spacingAndGlyphs">MVT</text></g></svg>
<svg style="left:596px;top:391px" width="16" height="16" viewBox="596 391 16 16"><path transform="translate(596.35 391.32) scale(0.6458)" d="M12 4.5C7 4.5 2.73 7.61 1 12c1.73 4.39 6 7.5 11 7.5s9.27-3.11 11-7.5c-1.73-4.39-6-7.5-11-7.5zM12 17c-2.76 0-5-2.24-5-5s2.24-5 5-5 5 2.24 5 5-2.24 5-5 5zm0-8c-1.66 0-3 1.34-3 3s1.34 3 3 3 3-1.34 3-3-1.34-3-3-3z" fill="#3b6fde"/></svg>
<svg style="left:627px;top:392px" width="5" height="13" viewBox="627 392 5 13"><circle cx="629.65" cy="395.12" r="1.1" fill="#2a2a2a"/><circle cx="629.65" cy="398.47" r="1.1" fill="#2a2a2a"/><circle cx="629.65" cy="401.82" r="1.1" fill="#2a2a2a"/></svg>
<div class="rt" style="top:425px"><span style="letter-spacing:0.119px">Mapa własności gruntów</span></div>
<svg style="left:248px;top:424px" width="9" height="12" viewBox="248 424 9 12"><g fill="#5c5c5c"><circle cx="249.80" cy="425.44" r="0.78"/><circle cx="252.70" cy="425.44" r="0.78"/><circle cx="255.60" cy="425.44" r="0.78"/><circle cx="249.80" cy="428.29" r="0.78"/><circle cx="252.70" cy="428.29" r="0.78"/><circle cx="255.60" cy="428.29" r="0.78"/><circle cx="249.80" cy="431.14" r="0.78"/><circle cx="252.70" cy="431.14" r="0.78"/><circle cx="255.60" cy="431.14" r="0.78"/><circle cx="249.80" cy="433.99" r="0.78"/><circle cx="252.70" cy="433.99" r="0.78"/><circle cx="255.60" cy="433.99" r="0.78"/></g></svg>
<svg style="left:267px;top:421px" width="17" height="17" viewBox="267 421 17 17"><g transform="translate(275.40 429.59)"><g fill="none" stroke="#404040" stroke-width="0.62"><path d="M-6.1 -0.6a6.1 5.9 0 0 1 12.2 0"/><path d="M-3 -0.6c0-3.3 1.3-5.9 3-5.9s3 2.6 3 5.9"/><path d="M0 -6.5v5.9"/><path d="M-5 -4.5h10"/><path d="M-5.9 -2.5h11.8"/></g><text x="0" y="5.25" text-anchor="middle" font-family="DejaVu Sans Condensed,Liberation Sans,sans-serif" font-weight="bold" font-size="7.1" fill="#1e1e1e" textLength="11.2" lengthAdjust="spacingAndGlyphs">MVT</text></g></svg>
<svg style="left:596px;top:422px" width="16" height="16" viewBox="596 422 16 16"><path transform="translate(596.35 422.04) scale(0.6458)" d="M12 4.5C7 4.5 2.73 7.61 1 12c1.73 4.39 6 7.5 11 7.5s9.27-3.11 11-7.5c-1.73-4.39-6-7.5-11-7.5zM12 17c-2.76 0-5-2.24-5-5s2.24-5 5-5 5 2.24 5 5-2.24 5-5 5zm0-8c-1.66 0-3 1.34-3 3s1.34 3 3 3 3-1.34 3-3-1.34-3-3-3z" fill="#3b6fde"/></svg>
<svg style="left:627px;top:423px" width="5" height="13" viewBox="627 423 5 13"><circle cx="629.65" cy="425.84" r="1.1" fill="#2a2a2a"/><circle cx="629.65" cy="429.19" r="1.1" fill="#2a2a2a"/><circle cx="629.65" cy="432.54" r="1.1" fill="#2a2a2a"/></svg>
<div class="rt" style="top:456px"><span style="letter-spacing:0.066px">OIMK<span class="us">_</span>A Mokradła</span></div>
<svg style="left:248px;top:455px" width="9" height="11" viewBox="248 455 9 11"><g fill="#5c5c5c"><circle cx="249.80" cy="456.16" r="0.78"/><circle cx="252.70" cy="456.16" r="0.78"/><circle cx="255.60" cy="456.16" r="0.78"/><circle cx="249.80" cy="459.01" r="0.78"/><circle cx="252.70" cy="459.01" r="0.78"/><circle cx="255.60" cy="459.01" r="0.78"/><circle cx="249.80" cy="461.86" r="0.78"/><circle cx="252.70" cy="461.86" r="0.78"/><circle cx="255.60" cy="461.86" r="0.78"/><circle cx="249.80" cy="464.71" r="0.78"/><circle cx="252.70" cy="464.71" r="0.78"/><circle cx="255.60" cy="464.71" r="0.78"/></g></svg>
<svg style="left:267px;top:452px" width="17" height="17" viewBox="267 452 17 17"><g transform="translate(275.40 460.31)"><g fill="none" stroke="#404040" stroke-width="0.62"><path d="M-6.1 -0.6a6.1 5.9 0 0 1 12.2 0"/><path d="M-3 -0.6c0-3.3 1.3-5.9 3-5.9s3 2.6 3 5.9"/><path d="M0 -6.5v5.9"/><path d="M-5 -4.5h10"/><path d="M-5.9 -2.5h11.8"/></g><text x="0" y="5.25" text-anchor="middle" font-family="DejaVu Sans Condensed,Liberation Sans,sans-serif" font-weight="bold" font-size="7.1" fill="#1e1e1e" textLength="11.2" lengthAdjust="spacingAndGlyphs">MVT</text></g></svg>
<svg style="left:596px;top:452px" width="16" height="17" viewBox="596 452 16 17"><path transform="translate(596.35 452.76) scale(0.6458)" d="M12 4.5C7 4.5 2.73 7.61 1 12c1.73 4.39 6 7.5 11 7.5s9.27-3.11 11-7.5c-1.73-4.39-6-7.5-11-7.5zM12 17c-2.76 0-5-2.24-5-5s2.24-5 5-5 5 2.24 5 5-2.24 5-5 5zm0-8c-1.66 0-3 1.34-3 3s1.34 3 3 3 3-1.34 3-3-1.34-3-3-3z" fill="#3b6fde"/></svg>
<svg style="left:627px;top:453px" width="5" height="13" viewBox="627 453 5 13"><circle cx="629.65" cy="456.56" r="1.1" fill="#2a2a2a"/><circle cx="629.65" cy="459.91" r="1.1" fill="#2a2a2a"/><circle cx="629.65" cy="463.26" r="1.1" fill="#2a2a2a"/></svg>
<div class="rt" style="top:486px"><span style="letter-spacing:0.070px">Średnia prędkość wiatru (150m)</span></div>
<svg style="left:248px;top:485px" width="9" height="12" viewBox="248 485 9 12"><g fill="#5c5c5c"><circle cx="249.80" cy="486.88" r="0.78"/><circle cx="252.70" cy="486.88" r="0.78"/><circle cx="255.60" cy="486.88" r="0.78"/><circle cx="249.80" cy="489.73" r="0.78"/><circle cx="252.70" cy="489.73" r="0.78"/><circle cx="255.60" cy="489.73" r="0.78"/><circle cx="249.80" cy="492.58" r="0.78"/><circle cx="252.70" cy="492.58" r="0.78"/><circle cx="255.60" cy="492.58" r="0.78"/><circle cx="249.80" cy="495.43" r="0.78"/><circle cx="252.70" cy="495.43" r="0.78"/><circle cx="255.60" cy="495.43" r="0.78"/></g></svg>
<svg style="left:267px;top:482px" width="17" height="17" viewBox="267 482 17 17"><g transform="translate(275.40 491.03)"><g fill="none" stroke="#404040" stroke-width="0.62"><path d="M-6.1 -0.6a6.1 5.9 0 0 1 12.2 0"/><path d="M-3 -0.6c0-3.3 1.3-5.9 3-5.9s3 2.6 3 5.9"/><path d="M0 -6.5v5.9"/><path d="M-5 -4.5h10"/><path d="M-5.9 -2.5h11.8"/></g><text x="0" y="5.25" text-anchor="middle" font-family="DejaVu Sans Condensed,Liberation Sans,sans-serif" font-weight="bold" font-size="7.1" fill="#1e1e1e" textLength="11.2" lengthAdjust="spacingAndGlyphs">XYZ</text></g></svg>
<svg style="left:596px;top:483px" width="16" height="16" viewBox="596 483 16 16"><path transform="translate(596.35 483.48) scale(0.6458)" d="M12 4.5C7 4.5 2.73 7.61 1 12c1.73 4.39 6 7.5 11 7.5s9.27-3.11 11-7.5c-1.73-4.39-6-7.5-11-7.5zM12 17c-2.76 0-5-2.24-5-5s2.24-5 5-5 5 2.24 5 5-2.24 5-5 5zm0-8c-1.66 0-3 1.34-3 3s1.34 3 3 3 3-1.34 3-3-1.34-3-3-3z" fill="#3b6fde"/></svg>
<svg style="left:627px;top:484px" width="5" height="13" viewBox="627 484 5 13"><circle cx="629.65" cy="487.28" r="1.1" fill="#2a2a2a"/><circle cx="629.65" cy="490.63" r="1.1" fill="#2a2a2a"/><circle cx="629.65" cy="493.98" r="1.1" fill="#2a2a2a"/></svg>
<div class="rt" style="top:517px"><span style="letter-spacing:-0.110px">SKTR<span class="us">_</span>L Tory</span></div>
<svg style="left:248px;top:516px" width="9" height="12" viewBox="248 516 9 12"><g fill="#5c5c5c"><circle cx="249.80" cy="517.60" r="0.78"/><circle cx="252.70" cy="517.60" r="0.78"/><circle cx="255.60" cy="517.60" r="0.78"/><circle cx="249.80" cy="520.45" r="0.78"/><circle cx="252.70" cy="520.45" r="0.78"/><circle cx="255.60" cy="520.45" r="0.78"/><circle cx="249.80" cy="523.30" r="0.78"/><circle cx="252.70" cy="523.30" r="0.78"/><circle cx="255.60" cy="523.30" r="0.78"/><circle cx="249.80" cy="526.15" r="0.78"/><circle cx="252.70" cy="526.15" r="0.78"/><circle cx="255.60" cy="526.15" r="0.78"/></g></svg>
<svg style="left:267px;top:513px" width="17" height="17" viewBox="267 513 17 17"><g transform="translate(275.40 521.75)"><g fill="none" stroke="#404040" stroke-width="0.62"><path d="M-6.1 -0.6a6.1 5.9 0 0 1 12.2 0"/><path d="M-3 -0.6c0-3.3 1.3-5.9 3-5.9s3 2.6 3 5.9"/><path d="M0 -6.5v5.9"/><path d="M-5 -4.5h10"/><path d="M-5.9 -2.5h11.8"/></g><text x="0" y="5.25" text-anchor="middle" font-family="DejaVu Sans Condensed,Liberation Sans,sans-serif" font-weight="bold" font-size="7.1" fill="#1e1e1e" textLength="11.2" lengthAdjust="spacingAndGlyphs">MVT</text></g></svg>
<svg style="left:596px;top:514px" width="16" height="16" viewBox="596 514 16 16"><path transform="translate(596.35 514.20) scale(0.6458)" d="M12 4.5C7 4.5 2.73 7.61 1 12c1.73 4.39 6 7.5 11 7.5s9.27-3.11 11-7.5c-1.73-4.39-6-7.5-11-7.5zM12 17c-2.76 0-5-2.24-5-5s2.24-5 5-5 5 2.24 5 5-2.24 5-5 5zm0-8c-1.66 0-3 1.34-3 3s1.34 3 3 3 3-1.34 3-3-1.34-3-3-3z" fill="#3b6fde"/></svg>
<svg style="left:627px;top:515px" width="5" height="13" viewBox="627 515 5 13"><circle cx="629.65" cy="518.00" r="1.1" fill="#2a2a2a"/><circle cx="629.65" cy="521.35" r="1.1" fill="#2a2a2a"/><circle cx="629.65" cy="524.70" r="1.1" fill="#2a2a2a"/></svg>
<div id="foot"></div><div id="fade"></div><div id="corner"></div><div id="ledge"></div>
</div>
</body>
</html>
